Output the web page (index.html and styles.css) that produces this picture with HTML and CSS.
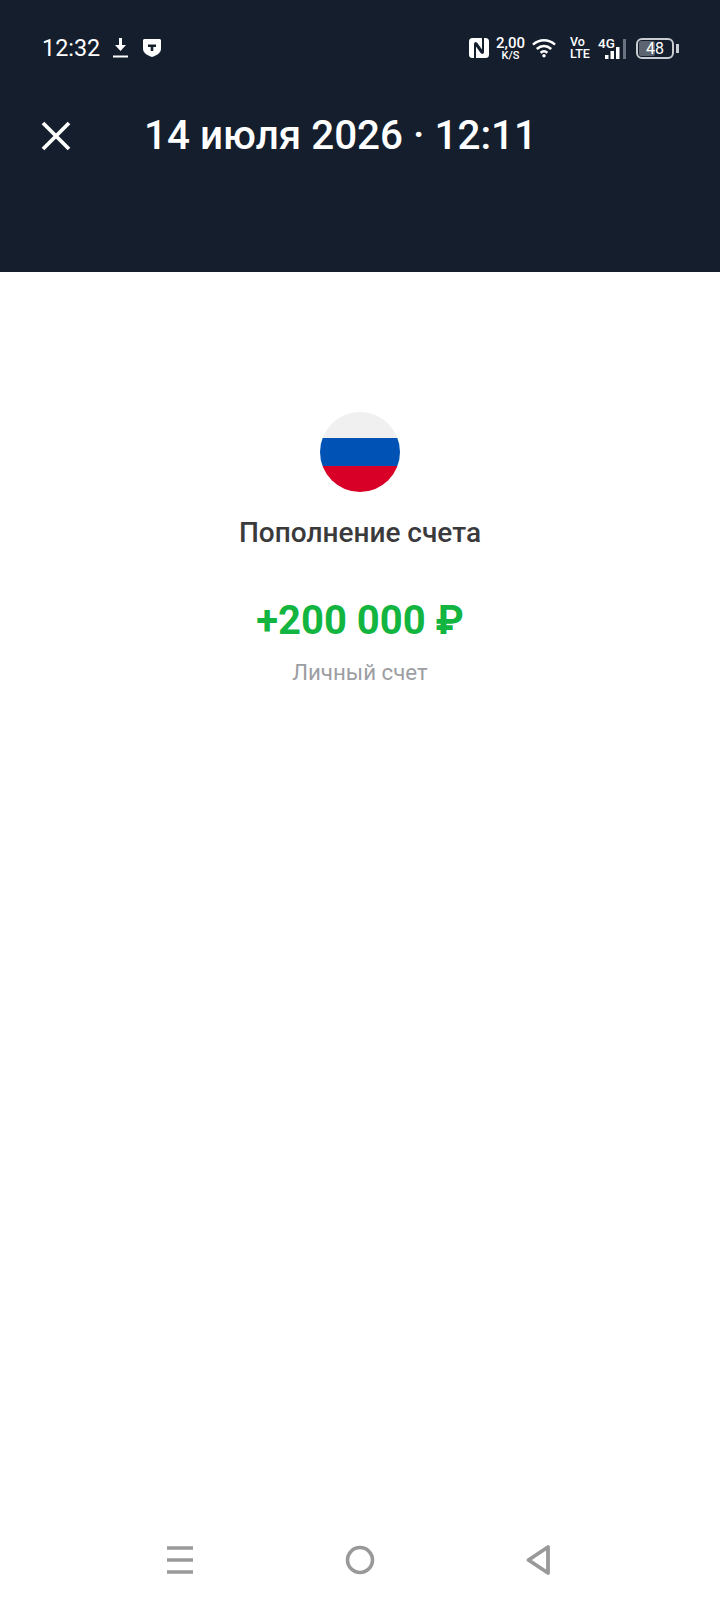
FILE: index.html
```html
<!DOCTYPE html>
<html lang="ru">
<head>
    <meta charset="UTF-8">
    <meta name="viewport" content="width=device-width, initial-scale=1.0">
    <title>Пополнение счета</title>
    <link rel="stylesheet" href="styles.css">
</head>
<body>
    <div class="page">
        <header class="top">
            <div class="status">
                <span class="time">12:32</span>
                <svg class="ic-download" width="15" height="20" viewBox="0 0 15 20">
                    <path d="M6 0h3v7h4l-5.500 6L2 7h4z" fill="#fff"/>
                    <rect x="0" y="17.500" width="15" height="2" fill="#fff"/>
                </svg>
                <svg class="ic-shield" width="18" height="18" viewBox="0 0 18 18">
                    <path d="M1 0h16l1 1v9c0 3-3 6-9 8-6-2-9-5-9-8V1z" fill="#fff"/>
                    <path d="M5 5.500h8V8h-2.700v4H7.700V8H5z" fill="#141e2d"/>
                </svg>
                <div class="status-right">
                    <svg class="ic-nfc" width="20" height="20" viewBox="0 0 20 20">
                        <rect width="20" height="20" rx="3.500" fill="#fff"/>
                        <path d="M6 20V6q0-1.500 1.500-.5L14 14.500M14 0v14q0 1.500-1.500.5L6 5.500" fill="none" stroke="#141e2d" stroke-width="2"/>
                    </svg>
                    <div class="speed"><b>2,00</b><small>K/S</small></div>
                    <svg class="ic-wifi" width="24" height="20" viewBox="0 0 25 20">
                        <g fill="none" stroke="#fff" stroke-width="2.600">
                            <path d="M1 6.500c7-6 16-6 23 0"/>
                            <path d="M5 11c4.500-4 10.500-4 15 0"/>
                            <path d="M9 15c2-2 5-2 7 0"/>
                        </g>
                        <circle cx="12.500" cy="18" r="1.800" fill="#fff"/>
                    </svg>
                    <div class="volte"><span>Vo</span><span>LTE</span></div>
                    <div class="signal">
                        <span class="net">4G</span>
                        <svg width="15" height="12" viewBox="0 0 15 12">
                            <rect x="0" y="8" width="3.500" height="4" fill="#fff"/>
                            <rect x="5.500" y="4" width="3.500" height="8" fill="#fff"/>
                            <rect x="11" y="0" width="3.500" height="12" fill="#fff"/>
                        </svg>
                    </div>
                    <span class="signal-off"></span>
                    <div class="battery">
                        <div class="battery-body">
                            <span class="battery-fill"></span>
                            <span class="battery-num">48</span>
                        </div>
                        <span class="battery-tip"></span>
                    </div>
                </div>
            </div>
            <div class="title-row">
                <svg class="close" width="30" height="30" viewBox="0 0 30 30">
                    <path d="M2 2l26 26M28 2L2 28" stroke="#fff" stroke-width="3.800" fill="none"/>
                </svg>
                <h1>14 июля 2026 · 12:11</h1>
            </div>
        </header>

        <main class="content">
            <svg class="flag" width="80" height="80" viewBox="0 0 80 80">
                <clipPath id="round"><circle cx="40" cy="40" r="40"/></clipPath>
                <g clip-path="url(#round)">
                    <rect width="80" height="26" fill="#f0f0f0"/>
                    <rect y="26" width="80" height="28" fill="#0052b4"/>
                    <rect y="54" width="80" height="26" fill="#d80027"/>
                </g>
            </svg>
            <div class="label">Пополнение счета</div>
            <div class="amount">+200 000 ₽</div>
            <div class="account">Личный счет</div>
        </main>

        <nav class="navbar">
            <svg width="28" height="30" viewBox="0 0 28 30">
                <path d="M1 3h26M1 15h26M1 27h26" stroke="#999" stroke-width="3.600" fill="none"/>
            </svg>
            <svg width="30" height="30" viewBox="0 0 30 30">
                <circle cx="15" cy="15" r="12.500" stroke="#999" stroke-width="3.600" fill="none"/>
            </svg>
            <svg width="26" height="32" viewBox="0 0 26 32">
                <path d="M22 3v26L2.500 16z" stroke="#999" stroke-width="3.800" stroke-linejoin="round" fill="none"/>
            </svg>
        </nav>
    </div>
</body>
</html>
```

FILE: styles.css
```css
body {
    margin: 0;
    padding: 0;
    background: #fff;
    font-family: Roboto, "Noto Sans", sans-serif;
}

.page {
    height: 1600px;
    display: flex;
    flex-direction: column;
    overflow: hidden;
}

/* шапка */
.top {
    height: 272px;
    background: #141e2d;
    color: #fff;
    box-sizing: border-box;
    padding: 33px 0 0 41px;
}

.status {
    display: flex;
    align-items: center;
    height: 30px;
}

.time {
    margin-left: 1px;
    font-size: 23.400px;
    line-height: 30px;
}

.ic-download {
    margin-left: 13px;
}

.ic-shield {
    margin-left: 15px;
}

.status-right {
    margin-left: auto;
    margin-right: 41px;
    display: flex;
    align-items: center;
}

.speed {
    margin-left: 8px;
    width: 27px;
    display: flex;
    flex-direction: column;
    align-items: center;
    line-height: 11px;
}

.speed b {
    font-size: 15px;
    font-weight: 500;
    line-height: 14px;
}

.speed small {
    font-size: 11px;
    font-weight: 500;
}

.ic-wifi {
    margin-left: 8px;
}

.volte {
    margin-left: 14px;
    width: 20px;
    display: flex;
    flex-direction: column;
    align-items: flex-start;
    font-size: 12.500px;
    font-weight: 500;
    line-height: 12px;
}

.signal {
    margin-left: 8px;
    width: 22px;
    display: flex;
    flex-direction: column;
    font-size: 13.500px;
    font-weight: 500;
    line-height: 13px;
}

.signal svg {
    align-self: flex-end;
    margin-top: -3px;
}

.signal-off {
    width: 3px;
    height: 20px;
    margin: 2px 0 0 3px;
    background: #6a7280;
}

.battery {
    margin-left: 10px;
    display: flex;
    align-items: center;
}

.battery-body {
    position: relative;
    box-sizing: border-box;
    width: 38px;
    height: 21px;
    border: 2px solid #c9ccd1;
    border-radius: 6px;
    display: flex;
    align-items: center;
    justify-content: center;
}

.battery-fill {
    position: absolute;
    left: 1px;
    top: 1px;
    bottom: 1px;
    width: 16px;
    border-radius: 2px;
    background: #5c6470;
}

.battery-num {
    position: relative;
    font-size: 16px;
}

.battery-tip {
    width: 3px;
    height: 9px;
    margin-left: 2px;
    background: #c9ccd1;
}

.title-row {
    display: flex;
    align-items: center;
    margin-top: 43px;
    height: 60px;
}

.close {
    flex: none;
}

h1 {
    margin: 0 0 0 73px;
    font-size: 40.400px;
    font-weight: 500;
    line-height: 60px;
    white-space: nowrap;
}

/* операция */
.content {
    flex: 1;
    display: flex;
    flex-direction: column;
    align-items: center;
    padding-top: 140px;
}

.label {
    margin-top: 25px;
    font-size: 28px;
    font-weight: 500;
    line-height: 32px;
    color: #3a3a3c;
}

.amount {
    margin-top: 49px;
    font-size: 40px;
    font-weight: 700;
    line-height: 46px;
    color: #12b53f;
}

.account {
    margin-top: 15px;
    font-size: 22.300px;
    line-height: 26px;
    color: #9c9ea3;
}

.navbar {
    height: 30px;
    padding: 0 168px 25px 166px;
    display: flex;
    justify-content: space-between;
    align-items: center;
}
```
